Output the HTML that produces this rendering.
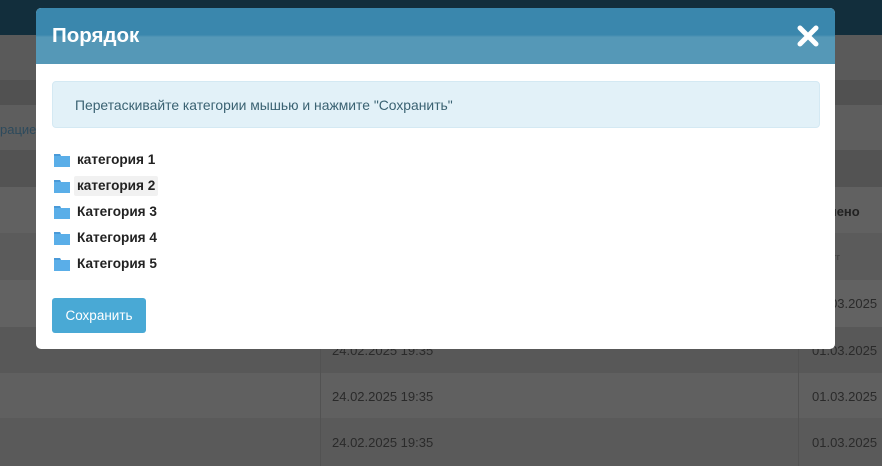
<!DOCTYPE html>
<html><head><meta charset="utf-8"><style>
*{margin:0;padding:0;box-sizing:border-box}
body{width:882px;height:466px;overflow:hidden;background:#5c5c5c;font-family:"Liberation Sans","DejaVu Sans",sans-serif;position:relative}
.top{position:absolute;left:0;top:0;width:882px;height:35px;background:#122e3c}
.vl{position:absolute;top:187px;bottom:0;width:1px;background:#525252}
.bt{position:absolute;font-size:13px;color:#2a2a2a}
.modal{position:absolute;left:36px;top:8px;width:799px;height:341px;background:#fff;border-radius:5px;overflow:hidden}
.hd{height:56px;background:linear-gradient(#3a87ad 0,#3a87ad 48%,#5598b7 52%,#5598b7 100%);position:relative}
.hd h3{position:absolute;left:16px;top:16px;color:#fff;font-size:20.5px;font-weight:bold}
.x{position:absolute;right:16px;top:17px}
.info{position:absolute;left:16px;top:73px;width:768px;height:47px;background:#e2f1f8;border:1px solid #d4e9f3;border-radius:4px;color:#3a6272;font-size:13.9px;padding:15px 0 0 22px}
.it{position:absolute;left:18px;font-size:13.6px;font-weight:bold;color:#222;height:20px;line-height:20px}
.it svg{position:absolute;left:0;top:3px}
.it span{position:absolute;left:20px;white-space:nowrap;padding:0 3px;border-radius:2px}
.btn{position:absolute;left:16px;top:290px;width:94px;height:35px;background:#49a9d5;border-radius:3px;color:#fff;font-size:13.5px;line-height:35px;text-align:center}
</style></head><body>
<div class="top"></div>
<div style="position:absolute;left:0;top:35px;width:882px;height:45px;background:#5a5a5a"></div>
<div style="position:absolute;left:0;top:80px;width:882px;height:25px;background:#515151"></div>
<div style="position:absolute;left:0;top:105px;width:882px;height:45px;background:#5e5e5e"></div>
<div style="position:absolute;left:0;top:150px;width:882px;height:37px;background:#535353"></div>
<div style="position:absolute;left:0;top:187px;width:882px;height:46px;background:#616161"></div>
<div style="position:absolute;left:0;top:233px;width:882px;height:47px;background:#5b5b5b"></div>
<div style="position:absolute;left:0;top:280px;width:882px;height:47px;background:#626262"></div>
<div style="position:absolute;left:0;top:327px;width:882px;height:46px;background:#585858"></div>
<div style="position:absolute;left:0;top:373px;width:882px;height:45px;background:#606060"></div>
<div style="position:absolute;left:0;top:418px;width:882px;height:48px;background:#5a5a5a"></div>
<div class="vl" style="left:320px"></div><div class="vl" style="left:798px"></div>
<div class="bt" style="left:0;top:122px;color:#2d4a5c">рацие</div>
<div class="bt" style="left:812px;top:204px;font-weight:bold;color:#222">менено</div>
<div class="bt" style="left:812px;top:252px;font-size:9px;color:#3a3a3a">мм.гггг</div>
<div class="bt" style="left:812px;top:296px">01.03.2025</div>
<div class="bt" style="left:332px;top:343px">24.02.2025 19:35</div><div class="bt" style="left:812px;top:343px">01.03.2025</div>
<div class="bt" style="left:332px;top:389px">24.02.2025 19:35</div><div class="bt" style="left:812px;top:389px">01.03.2025</div>
<div class="bt" style="left:332px;top:435px">24.02.2025 19:35</div><div class="bt" style="left:812px;top:435px">01.03.2025</div>
<div class="modal">
<div class="hd"><h3>Порядок</h3>
<svg class="x" width="22" height="22" viewBox="0 0 22 22"><path d="M3 3L19 19M19 3L3 19" stroke="#fff" stroke-width="5" stroke-linecap="round"/></svg></div>
<div class="info">Перетаскивайте категории мышью и нажмите "Сохранить"</div>
<div class="it" style="top:142px"><svg width="16" height="14"><path d="M0 1h6l1 2h9v11H0z" fill="#5aaee8"/><path d="M0 1h6l1 2H0z" fill="#4a9ad8"/></svg><span>категория 1</span></div>
<div class="it" style="top:168px"><svg width="16" height="14"><path d="M0 1h6l1 2h9v11H0z" fill="#5aaee8"/><path d="M0 1h6l1 2H0z" fill="#4a9ad8"/></svg><span style="background:#f1f1f1">категория 2</span></div>
<div class="it" style="top:194px"><svg width="16" height="14"><path d="M0 1h6l1 2h9v11H0z" fill="#5aaee8"/><path d="M0 1h6l1 2H0z" fill="#4a9ad8"/></svg><span>Категория 3</span></div>
<div class="it" style="top:220px"><svg width="16" height="14"><path d="M0 1h6l1 2h9v11H0z" fill="#5aaee8"/><path d="M0 1h6l1 2H0z" fill="#4a9ad8"/></svg><span>Категория 4</span></div>
<div class="it" style="top:246px"><svg width="16" height="14"><path d="M0 1h6l1 2h9v11H0z" fill="#5aaee8"/><path d="M0 1h6l1 2H0z" fill="#4a9ad8"/></svg><span>Категория 5</span></div>
<div class="btn">Сохранить</div>
</div>
</body></html>
